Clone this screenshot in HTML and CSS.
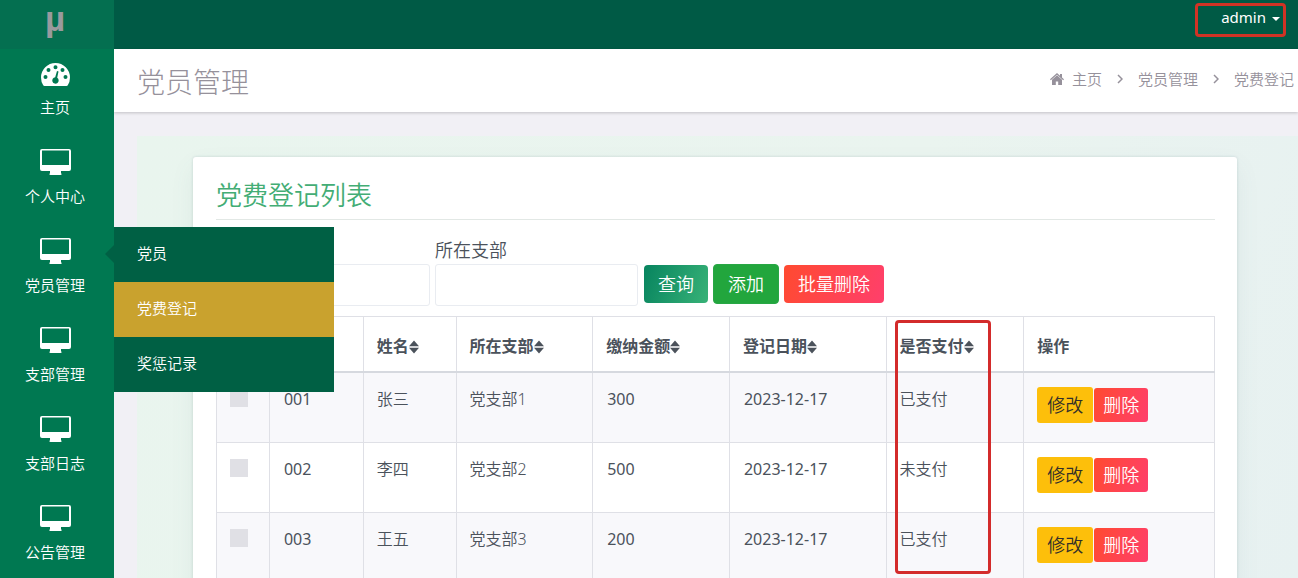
FILE: index.html
```html
<!DOCTYPE html>
<html lang="zh-CN">
<head>
<meta charset="utf-8">
<meta name="viewport" content="width=device-width, initial-scale=1">
<title>党费登记</title>
<link rel="stylesheet" href="styles.css">
</head>
<body>
<svg class="sprite" aria-hidden="true">
  <symbol id="monitor" viewBox="0 0 31 26">
    <path fill-rule="evenodd" d="M2 0h27a2 2 0 0 1 2 2v18a2 2 0 0 1-2 2h-8v2.500h.5q.500 1.500-1 1.500H10.500q-1.500 0-1-1.500h.5V22H2a2 2 0 0 1-2-2V2a2 2 0 0 1 2-2zM2 1.500V16h27V1.500z"/>
  </symbol>
  <symbol id="gauge" viewBox="0 0 29 23">
    <path fill-rule="evenodd" d="M14.500 0A14.500 14.500 0 0 1 29 14.500q0 4.500-2.200 7.700-.5.800-1.300.8h-22q-.8 0-1.300-.8Q0 19 0 14.500A14.500 14.500 0 0 1 14.500 0zM14.500 2.200a2 2 0 1 0 0 4 2 2 0 0 0 0-4zM7.500 5a2 2 0 1 0 0 4 2 2 0 0 0 0-4zM21.500 5a2 2 0 1 0 0 4 2 2 0 0 0 0-4zM4.500 12a2 2 0 1 0 0 4 2 2 0 0 0 0-4zM24.500 12a2 2 0 1 0 0 4 2 2 0 0 0 0-4zM16 8l-1.800 6.300a3.200 3.200 0 1 0 2 .5L17.500 8.500z"/>
  </symbol>
  <symbol id="home" viewBox="0 0 14 12">
    <path d="M7 0l3 2.700V1h2v3.500l2 1.800-.8.900L7 1.700.8 7.200 0 6.300z"/>
    <path d="M7 2.300l5 4.500V12H8.200V8.500H5.800V12H2V6.800z"/>
  </symbol>
  <symbol id="sort" viewBox="0 0 10 14">
    <path d="M5 .5L10 6.300H0zM5 13.500L0 7.700h10z"/>
  </symbol>
  <symbol id="chevron" viewBox="0 0 6 10">
    <path d="M1 1l4 4-4 4" fill="none" stroke="currentColor" stroke-width="1.500"/>
  </symbol>
</svg>
<div class="app">
  <aside class="sidebar">
    <a class="logo" href="#">µ</a>
    <ul class="nav">
      <li class="nav-item"><a class="nav-link" href="#"><svg class="nav-icon nav-icon-gauge"><use href="#gauge"/></svg><span>主页</span></a></li>
      <li class="nav-item"><a class="nav-link" href="#"><svg class="nav-icon"><use href="#monitor"/></svg><span>个人中心</span></a></li>
      <li class="nav-item"><a class="nav-link" href="#"><svg class="nav-icon"><use href="#monitor"/></svg><span>党员管理</span></a>
        <ul class="submenu">
          <li><a class="submenu-link" href="#">党员</a></li>
          <li><a class="submenu-link active" href="#">党费登记</a></li>
          <li><a class="submenu-link" href="#">奖惩记录</a></li>
        </ul>
      </li>
      <li class="nav-item"><a class="nav-link" href="#"><svg class="nav-icon"><use href="#monitor"/></svg><span>支部管理</span></a></li>
      <li class="nav-item"><a class="nav-link" href="#"><svg class="nav-icon"><use href="#monitor"/></svg><span>支部日志</span></a></li>
      <li class="nav-item"><a class="nav-link" href="#"><svg class="nav-icon"><use href="#monitor"/></svg><span>公告管理</span></a></li>
    </ul>
  </aside>
  <div class="page">
    <header class="topbar">
      <button class="user" type="button">admin<span class="caret"></span></button>
    </header>
    <div class="titlebar">
      <h1 class="page-title">党员管理</h1>
      <nav class="breadcrumb">
        <a href="#"><svg class="home-icon"><use href="#home"/></svg>主页</a>
        <svg class="chevron"><use href="#chevron"/></svg>
        <a href="#">党员管理</a>
        <svg class="chevron"><use href="#chevron"/></svg>
        <a href="#">党费登记</a>
      </nav>
    </div>
    <main class="content">
      <section class="card">
        <h2 class="card-title">党费登记列表</h2>
        <form class="search">
          <input class="field" type="text" aria-label="姓名">
          <div class="field-group">
            <label for="branch">所在支部</label>
            <input class="field" id="branch" type="text">
          </div>
          <div class="actions">
            <button class="btn btn-query" type="button">查询</button>
            <button class="btn btn-add" type="button">添加</button>
            <button class="btn btn-danger" type="button">批量删除</button>
          </div>
        </form>
        <table class="records">
          <colgroup>
            <col class="col-check"><col class="col-id"><col class="col-name"><col class="col-branch"><col class="col-amount"><col class="col-date"><col class="col-paid"><col class="col-ops">
          </colgroup>
          <thead>
            <tr>
              <th aria-label="选择"></th>
              <th aria-label="编号"></th>
              <th>姓名<svg class="sort"><use href="#sort"/></svg></th>
              <th>所在支部<svg class="sort"><use href="#sort"/></svg></th>
              <th>缴纳金额<svg class="sort"><use href="#sort"/></svg></th>
              <th>登记日期<svg class="sort"><use href="#sort"/></svg></th>
              <th class="marked">是否支付<svg class="sort"><use href="#sort"/></svg><span class="mark"></span></th>
              <th>操作</th>
            </tr>
          </thead>
          <tbody>
            <tr><td><input class="check" type="checkbox" aria-label="选择 001"></td><td class="num">001</td><td>张三</td><td>党支部1</td><td class="num">300</td><td class="num">2023-12-17</td><td>已支付</td><td><div class="row-actions"><button class="btn-edit" type="button">修改</button><button class="btn-delete" type="button">删除</button></div></td></tr>
            <tr><td><input class="check" type="checkbox" aria-label="选择 002"></td><td class="num">002</td><td>李四</td><td>党支部2</td><td class="num">500</td><td class="num">2023-12-17</td><td>未支付</td><td><div class="row-actions"><button class="btn-edit" type="button">修改</button><button class="btn-delete" type="button">删除</button></div></td></tr>
            <tr><td><input class="check" type="checkbox" aria-label="选择 003"></td><td class="num">003</td><td>王五</td><td>党支部3</td><td class="num">200</td><td class="num">2023-12-17</td><td>已支付</td><td><div class="row-actions"><button class="btn-edit" type="button">修改</button><button class="btn-delete" type="button">删除</button></div></td></tr>
          </tbody>
        </table>
      </section>
    </main>
  </div>
</div>
</body>
</html>
```
FILE: styles.css
```css
* { box-sizing: border-box; }
body {
  margin: 0;
  font-family: "Noto Sans", "Noto Sans CJK SC", sans-serif;
  font-size: 16px;
  font-weight: 350;
  line-height: 24px;
  color: #4b525b;
}
a { color: inherit; text-decoration: none; }
ul { list-style: none; margin: 0; padding: 0; }
button, input { font: inherit; margin: 0; }
button { cursor: pointer; }
svg { fill: currentColor; flex: none; }
.sprite { display: none; }
.app { display: flex; height: 100vh; overflow: hidden; }

/* Sidebar */
.sidebar { flex: none; width: 114px; background: #007851; color: #fff; z-index: 2; }
.logo {
  display: block;
  height: 49px;
  padding-right: 4px;
  background: #046f50;
  color: #9a9a9d;
  font-family: "Liberation Sans", sans-serif;
  font-size: 35px;
  font-weight: 700;
  line-height: 38px;
  text-align: center;
}
.nav-item { position: relative; height: 89px; }
.nav-link {
  display: flex;
  flex-direction: column;
  align-items: center;
  gap: 9px;
  padding: 11px 4px 0 0;
  font-size: 15px;
}
.nav-icon { width: 31px; height: 26px; }
.nav-icon-gauge { width: 29px; height: 23px; margin-top: 3px; }
.submenu {
  position: absolute;
  top: 0;
  left: 100%;
  width: 220px;
  background: #006044;
}
.submenu::before {
  content: "";
  position: absolute;
  top: 18px;
  right: 100%;
  border: 9px solid transparent;
  border-left: 0;
  border-right-color: #006044;
}
.submenu-link {
  display: block;
  padding: 14px 23px 17px;
  font-size: 15px;
}
.submenu-link.active { background: #c9a22e; }

/* Header */
.page { flex: 1; min-width: 0; display: flex; flex-direction: column; background: #f1f0f5; }
.topbar { flex: none; display: flex; justify-content: flex-end; align-items: flex-start; height: 49px; padding: 3px 12px; background: #005a45; }
.user {
  display: flex;
  align-items: center;
  gap: 6px;
  height: 34px;
  padding: 0 3px 6px 23px;
  border: 3px solid #d03325;
  border-radius: 4px;
  background: none;
  color: #fff;
  font-size: 15px;
  font-weight: 400;
}
.caret { margin-top: 3px; border: 4px solid transparent; border-top-color: #fff; border-bottom: 0; }
.titlebar {
  flex: none;
  display: flex;
  justify-content: space-between;
  align-items: center;
  height: 63px;
  padding: 0 4px 3px 23px;
  background: #fff;
  box-shadow: 0 1px 3px rgba(0, 0, 0, .2);
  color: #96919b;
  z-index: 1;
}
.page-title { margin: 0; padding-top: 5px; font-size: 28px; font-weight: 300; line-height: 40px; }
.breadcrumb { display: flex; align-items: center; gap: 15px; font-size: 15px; }
.breadcrumb a { display: flex; align-items: center; gap: 8px; }
.home-icon { width: 14px; height: 12px; }
.chevron { width: 6px; height: 10px; }

/* Content */
.content {
  flex: 1;
  min-height: 0;
  margin: 24px 0 0 23px;
  padding: 21px 61px 0 56px;
  background: linear-gradient(110deg, #e9f5ee, #eaf4ef 60%, #e7f1f1);
}
.card {
  padding: 23px 22px 24px 23px;
  background: #fff;
  border-radius: 3px;
  box-shadow: 0 0 3px rgba(70, 100, 110, .2), 0 10px 24px rgba(90, 110, 130, .08);
}
.card-title {
  margin: 0 0 20px;
  padding-bottom: 9px;
  border-bottom: 1px solid #e2e8e5;
  color: #43ad75;
  font-size: 26px;
  font-weight: 350;
  line-height: 30px;
}
.search { display: flex; align-items: flex-end; gap: 5px; margin-bottom: 10px; padding-left: 11px; font-size: 18px; }
.field-group { display: flex; flex-direction: column; gap: 3px; }
.field-group label { line-height: 21px; }
.field { width: 203px; height: 42px; padding: 0 12px; border: 1px solid #e9ecf1; border-radius: 3px; background: #fff; }
.actions { display: flex; align-items: center; gap: 5px; padding: 0 0 2px 1px; }
.btn { height: 38px; padding: 0 14px; border: 0; border-radius: 4px; color: #fff; }
.btn-query { background: linear-gradient(110deg, #07845f, #38b277); }
.btn-add { height: 40px; border: 1px solid #28a745; background: #22a63d; }
.btn-danger, .btn-delete { background: linear-gradient(110deg, #ff4a30, #ff3f6c); }

/* Table */
.records { width: 100%; table-layout: fixed; border-collapse: collapse; }
.col-check { width: 5.3%; }
.col-id { width: 9.4%; }
.col-name { width: 9.3%; }
.col-branch { width: 13.7%; }
.col-amount { width: 13.7%; }
.col-date { width: 15.7%; }
.col-paid { width: 13.8%; }
.records th, .records td { padding: 14px 13px 0; border: 1px solid #dfe0e6; text-align: left; vertical-align: top; }
.records th { height: 55px; padding-top: 17px; border-bottom: 2px solid #d6d9df; font-weight: 700; white-space: nowrap; }
.records td { height: 70px; }
.records tbody tr:first-child td { height: 71px; }
.records .num { padding-left: 14px; font-weight: 400; }
.records tbody tr:nth-child(odd) { background: #f8f8fb; }
.sort { width: 10px; height: 14px; vertical-align: -2px; }
.check { display: block; appearance: none; width: 18px; height: 18px; margin-top: 2px; background: #e0e0e5; }
.row-actions { display: flex; align-items: center; gap: 1px; font-size: 18px; }
.btn-edit { height: 36px; padding: 0 10px; border: 0; border-radius: 3px; background: #fdbf0b; color: #33302a; }
.btn-delete { height: 34px; padding: 0 9px; border: 0; border-radius: 3px; color: #fff; }
.marked { position: relative; }
.mark {
  position: absolute;
  top: 3px;
  left: 8px;
  width: 96px;
  height: 254px;
  border: 3px solid #d32b2b;
  border-radius: 4px;
  pointer-events: none;
}
```
